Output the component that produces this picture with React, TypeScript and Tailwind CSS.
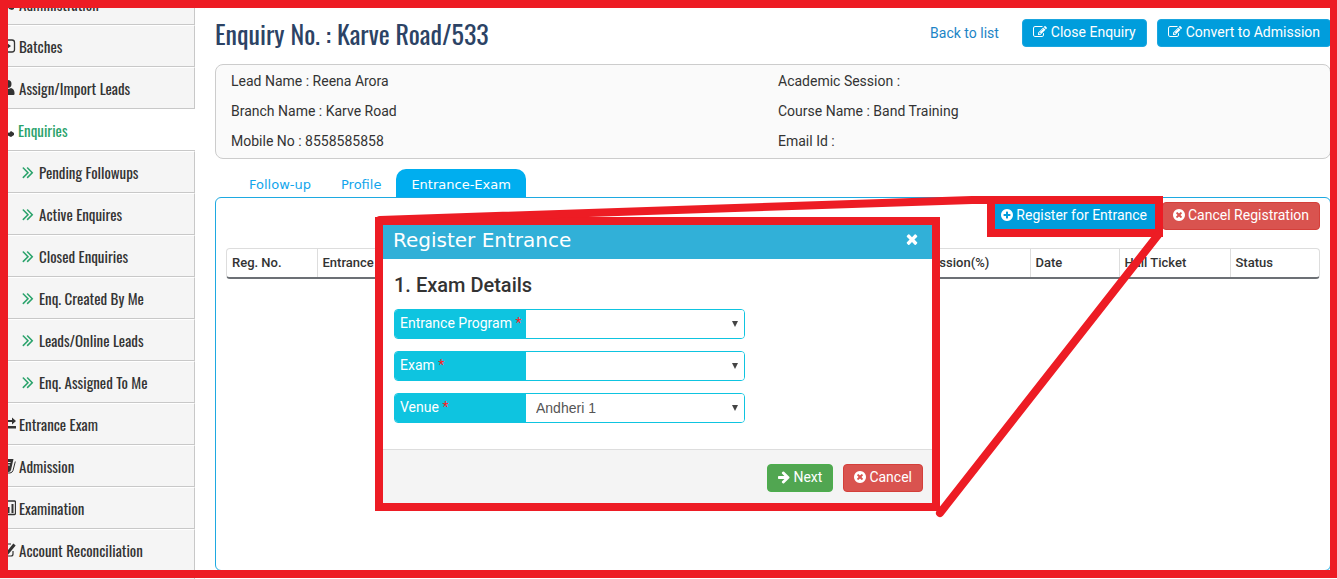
import type { ReactNode } from "react";

const ICONS = {
  edit: "M888 1184l116-116-152-152-116 116v56h96v96h56zm440-720q-16-16-33 1l-350 350q-17 17-1 33t33-1l350-350q17-17 1-33zm80 594v190q0 119-84.5 203.5t-203.5 84.5h-832q-119 0-203.5-84.5t-84.5-203.5v-832q0-119 84.5-203.5t203.5-84.5h832q63 0 117 25 15 7 18 23 3 17-9 29l-49 49q-14 14-32 8-23-6-45-6h-832q-66 0-113 47t-47 113v832q0 66 47 113t113 47h832q66 0 113-47t47-113v-126q0-13 9-22l64-64q15-15 35-7t20 29zm-96-738l288 288-672 672h-288v-288zm444 132l-92 92-288-288 92-92q28-28 68-28t68 28l152 152q28 28 28 68t-28 68z",
  plus: "M1344 960v-128q0-26-19-45t-45-19h-256v-256q0-26-19-45t-45-19h-128q-26 0-45 19t-19 45v256h-256q-26 0-45 19t-19 45v128q0 26 19 45t45 19h256v256q0 26 19 45t45 19h128q26 0 45-19t19-45v-256h256q26 0 45-19t19-45zm320-64q0 209-103 385.5t-279.5 279.5-385.5 103-385.5-103-279.5-279.5-103-385.5 103-385.5 279.5-279.5 385.5-103 385.5 103 279.5 279.5 103 385.5z",
  cancel: "M1277 1122q0-26-19-45l-181-181 181-181q19-19 19-45 0-27-19-46l-90-90q-19-19-46-19-26 0-45 19l-181 181-181-181q-19-19-45-19-27 0-46 19l-90 90q-19 19-19 46 0 26 19 45l181 181-181 181q-19 19-19 45 0 27 19 46l90 90q19 19 46 19 26 0 45-19l181-181 181 181q19 19 45 19 27 0 46-19l90-90q19-19 19-46zm387-226q0 209-103 385.5t-279.5 279.5-385.5 103-385.5-103-279.5-279.5-103-385.5 103-385.5 279.5-279.5 385.5-103 385.5 103 279.5 279.5 103 385.5z",
  close: "M1490 1322q0 40-28 68l-136 136q-28 28-68 28t-68-28l-294-294-294 294q-28 28-68 28t-68-28l-136-136q-28-28-28-68t28-68l294-294-294-294q-28-28-28-68t28-68l136-136q28-28 68-28t68 28l294 294 294-294q28-28 68-28t68 28l136 136q28 28 28 68t-28 68l-294 294 294 294q28 28 28 68z",
  next: "M1600 960q0 54-37 91l-651 651q-39 37-91 37-51 0-90-37l-75-75q-38-38-38-91t38-91l293-293h-704q-52 0-84.5-37.5t-32.5-90.5v-128q0-53 32.5-90.5t84.5-37.5h704l-293-294q-38-36-38-90t38-90l75-75q38-38 90-38 53 0 91 38l651 651q37 35 37 90z",
  chevrons: "M979 960q0 13-10 23l-466 466q-10 10-23 10t-23-10l-50-50q-10-10-10-23t10-23l393-393-393-393q-10-10-10-23t10-23l50-50q10-10 23-10t23 10l466 466q10 10 10 23zm384 0q0 13-10 23l-466 466q-10 10-23 10t-23-10l-50-50q-10-10-10-23t10-23l393-393-393-393q-10-10-10-23t10-23l50-50q10-10 23-10t23 10l466 466q10 10 10 23z",
};

function Icon({ name, className = "size-[14px]" }: { name: keyof typeof ICONS; className?: string }) {
  return (
    <svg viewBox="0 0 1792 1792" fill="currentColor" aria-hidden="true" className={`shrink-0 ${className}`}>
      <path d={ICONS[name]} />
    </svg>
  );
}

interface MenuItem {
  label: string;
  glyph?: ReactNode;
  sub?: boolean;
  active?: boolean;
}

const MENU: MenuItem[] = [
  { label: "Administration", glyph: <path d="M8 1a5 5 0 1 1 0 10A5 5 0 0 1 8 1zM7 9h5l2 2v2l-2 1-3-1z" fill="currentColor" /> },
  {
    label: "Batches",
    glyph: (
      <>
        <path d="M5 2h7q2.500 0 2.500 2.500v7Q14.500 14 12 14H5" fill="none" stroke="currentColor" strokeWidth="1.300" />
        <path d="M3 6.500h3V4.200L11 8l-5 3.800V9.500H3z" fill="currentColor" />
      </>
    ),
  },
  { label: "Assign/Import Leads", glyph: <path d="M7.500 0a3.800 3.800 0 1 1 0 8 3.800 3.800 0 0 1 0-8zM0 15v-3q0-3 4-4 3.500 2 7 0 3.500 1 3.500 5v1q0 1-1 1z" fill="currentColor" /> },
  { label: "Enquiries", active: true, glyph: <path d="M2 2l3-1 2 4-2 1.500q1 3 4 4.500l2-2 3 2v2l-3 2Q2 13 2 2z" fill="currentColor" /> },
  { label: "Pending Followups", sub: true },
  { label: "Active Enquires", sub: true },
  { label: "Closed Enquiries", sub: true },
  { label: "Enq. Created By Me", sub: true },
  { label: "Leads/Online Leads", sub: true },
  { label: "Enq. Assigned To Me", sub: true },
  { label: "Entrance Exam", glyph: <path d="M1 4h11V1.500L16 5l-4 3.500V6H1zM16 10H5V7.500L1 11.500l4 3.500v-2.500h11z" fill="currentColor" /> },
  {
    label: "Admission",
    glyph: (
      <>
        <path d="M1 1h12.500l-2.500 11q-.5 2-2.500 2H1z" fill="currentColor" />
        <path d="M4 4.500h6.500M4 7h6" fill="none" stroke="#f5f5f5" />
        <path d="M15.300 3.500l-2.300 9q-.5 2-3 2.500H4" fill="none" stroke="currentColor" />
      </>
    ),
  },
  {
    label: "Examination",
    glyph: (
      <>
        <rect x="1" y="1" width="14.500" height="13.500" rx="1" fill="none" stroke="currentColor" strokeWidth="1.300" />
        <path d="M4 9h2v4H4zM7.500 7h2v6h-2zM11.500 4h2v9h-2z" fill="currentColor" />
      </>
    ),
  },
  {
    label: "Account Reconciliation",
    glyph: (
      <>
        <path d="M11 2H4Q2 2 2 4v8q0 2 2 2h7q2 0 2-2V9" fill="none" stroke="currentColor" strokeWidth="1.200" />
        <path d="M5 8l3 2.500 6.500-8" fill="none" stroke="currentColor" strokeWidth="3" />
      </>
    ),
  },
];

const narrow = "font-['Oswald','Liberation_Sans_Narrow','Roboto_Condensed',sans-serif]";

function Sidebar() {
  return (
    <nav className={`${narrow} -mt-[17px] flex w-[195px] shrink-0 flex-col text-[15px] text-[#333]`}>
      {MENU.map((item) => (
        <a
          key={item.label}
          href="#"
          className={`flex h-[42px] shrink-0 items-center border-t border-b border-t-white border-b-[#c8c8c8] whitespace-nowrap ${
            item.active ? "bg-white" : "border-r border-r-[#c8c8c8] bg-[#f5f5f5]"
          } ${item.sub ? "gap-px pl-[18px]" : item.active ? "gap-0.5" : "gap-[3px]"}`}
        >
          {item.sub ? (
            <Icon name="chevrons" className="size-5 text-[#2ba36c]" />
          ) : (
            <svg viewBox="0 0 16 16" aria-hidden="true" className="size-4 shrink-0">
              {item.glyph}
            </svg>
          )}
          <span className={item.active ? "text-[#2ba36c]" : ""}>{item.label}</span>
        </a>
      ))}
      <div className="grow border-r border-[#c8c8c8] bg-[#f5f5f5]" />
    </nav>
  );
}

const TONES = {
  blue: "bg-[#009ddc] border-[#1aa6df]",
  red: "bg-[#d9534f] border-[#d43f3a]",
  green: "bg-[#51a651] border-[#4cae4c]",
};

function Button({ tone, icon, children }: { tone: keyof typeof TONES; icon: keyof typeof ICONS; children: ReactNode }) {
  return (
    <button
      type="button"
      className={`flex h-7 items-center rounded border px-2.5 pb-0.5 text-sm whitespace-nowrap text-white ${
        icon === "edit" ? "gap-1" : "gap-[3px]"
      } ${TONES[tone]}`}
    >
      <Icon name={icon} className={icon === "edit" ? "size-[14px]" : "-mx-px size-[14px]"} />
      {children}
    </button>
  );
}

function LeadInfo() {
  return (
    <section className="mt-[17px] grid grid-cols-2 rounded-lg border border-[#ccc] bg-[#fafafa] pt-px pr-[5px] pb-0.5 pl-[15px] text-sm leading-[30px] text-[#333]">
      <p>Lead Name : Reena Arora</p>
      <p>Academic Session :</p>
      <p>Branch Name : Karve Road</p>
      <p>Course Name : Band Training</p>
      <p>Mobile No : 8558585858</p>
      <p>Email Id :</p>
    </section>
  );
}

function RegistrationTable() {
  return (
    <div className="mx-2.5 mt-[18px] overflow-hidden rounded border border-b-2 border-[#ddd] border-b-[#6c7075]">
      <table className="w-full table-fixed text-left text-[13px] text-[#333]">
        <thead>
          <tr className="h-7 *:border-r *:border-[#ddd] *:px-[5px] *:font-medium *:last:border-r-0">
            <th className="w-[90px]">Reg. No.</th>
            <th>Entrance</th>
            <th className="w-[133px]">Concession(%)</th>
            <th className="w-[89px]">Date</th>
            <th className="w-[111px]">Hall Ticket</th>
            <th className="w-[89px]">Status</th>
          </tr>
        </thead>
      </table>
    </div>
  );
}

function Field({ id, label, value = "" }: { id: string; label: string; value?: string }) {
  return (
    <div className="relative flex h-[30px] w-[351px] overflow-hidden rounded border border-[#0ec4e0]">
      <label htmlFor={id} className="w-[131px] shrink-0 bg-[#0ec4e0] pl-[5px] text-sm leading-[26px] text-white">
        {label} <span className="text-[#ff1c1c]">*</span>
      </label>
      <select
        id={id}
        defaultValue={value}
        className="grow appearance-none bg-white pl-2.5 font-['Liberation_Sans',sans-serif] text-sm text-[#555]"
      >
        <option>{value}</option>
      </select>
      <svg viewBox="0 0 6 6" aria-hidden="true" className="pointer-events-none absolute top-[11px] right-1.5 size-1.5 fill-[#444]">
        <path d="M0 0h6L3 6z" />
      </svg>
    </div>
  );
}

function RegisterDialog() {
  return (
    <div
      role="dialog"
      aria-label="Register Entrance"
      className="absolute top-[217px] left-[375px] flex w-[565px] flex-col border-8 border-[#ed1c24] bg-white"
    >
      <header className="flex h-[34px] items-center justify-between bg-[#31b0d8] px-[10px] text-white">
        <h2 className="pb-1 font-['DejaVu_Sans',sans-serif] text-xl">Register Entrance</h2>
        <button type="button" aria-label="Close" className="pr-0.5 pb-1.5">
          <Icon name="close" className="size-4" />
        </button>
      </header>
      <div className="flex flex-col gap-3 px-[11px] pt-3.5 pb-[26px]">
        <h3 className="text-xl leading-6 font-medium text-[#333]">1. Exam Details</h3>
        <Field id="program" label="Entrance Program" />
        <Field id="exam" label="Exam" />
        <Field id="venue" label="Venue" value="Andheri 1" />
      </div>
      <footer className="flex justify-end gap-2.5 border-t border-[#ddd] bg-[#f4f4f4] pt-3.5 pr-[9px] pb-[11px]">
        <Button tone="green" icon="next">Next</Button>
        <Button tone="red" icon="cancel">Cancel</Button>
      </footer>
    </div>
  );
}

// Red marker lines that tie the toolbar button to the dialog
function Callout() {
  return (
    <svg className="pointer-events-none absolute inset-0 size-full" fill="none" stroke="#ed1c24" strokeWidth="8" aria-hidden="true">
      <rect x="991" y="200" width="168" height="33" />
      <path d="M380 220L972 200H991M1158 235L940 513" strokeLinecap="round" />
    </svg>
  );
}

export default function App() {
  return (
    <div className="relative flex h-screen overflow-hidden bg-white font-['Roboto',sans-serif]">
      <Sidebar />
      <main className="flex min-w-0 grow flex-col pt-[19px] pr-1.5 pb-2 pl-5">
        <div className="flex h-7 items-center justify-between">
          <h1 className={`${narrow} text-[26px] whitespace-nowrap text-[#2c4365]`}>Enquiry No. : Karve Road/533</h1>
          <div className="flex items-center gap-2.5">
            <a href="#" className="mr-[13px] text-sm text-[#1c84c6]">Back to list</a>
            <Button tone="blue" icon="edit">Close Enquiry</Button>
            <Button tone="blue" icon="edit">Convert to Admission</Button>
          </div>
        </div>
        <LeadInfo />
        <div role="tablist" className="mt-2.5 flex h-7 pl-[19px] font-['DejaVu_Sans',sans-serif] text-[13px] text-[#12a5ec]">
          <button type="button" role="tab" className="px-[15px] pt-1">Follow-up</button>
          <button type="button" role="tab" className="px-[15px] pt-1">Profile</button>
          <button type="button" role="tab" aria-selected="true" className="rounded-t-[10px] bg-[#00aeef] px-[15px] pt-1 text-white">
            Entrance-Exam
          </button>
        </div>
        <section className="grow rounded-md border border-[#1ea9e1]">
          <div className="flex justify-end gap-1 pt-1 pr-2.5">
            <Button tone="blue" icon="plus">Register for Entrance</Button>
            <Button tone="red" icon="cancel">Cancel Registration</Button>
          </div>
          <RegistrationTable />
        </section>
      </main>
      <RegisterDialog />
      <Callout />
      <div className="pointer-events-none absolute inset-x-0 top-0 bottom-px border-8 border-r-[7px] border-[#ed1c24]" />
    </div>
  );
}
